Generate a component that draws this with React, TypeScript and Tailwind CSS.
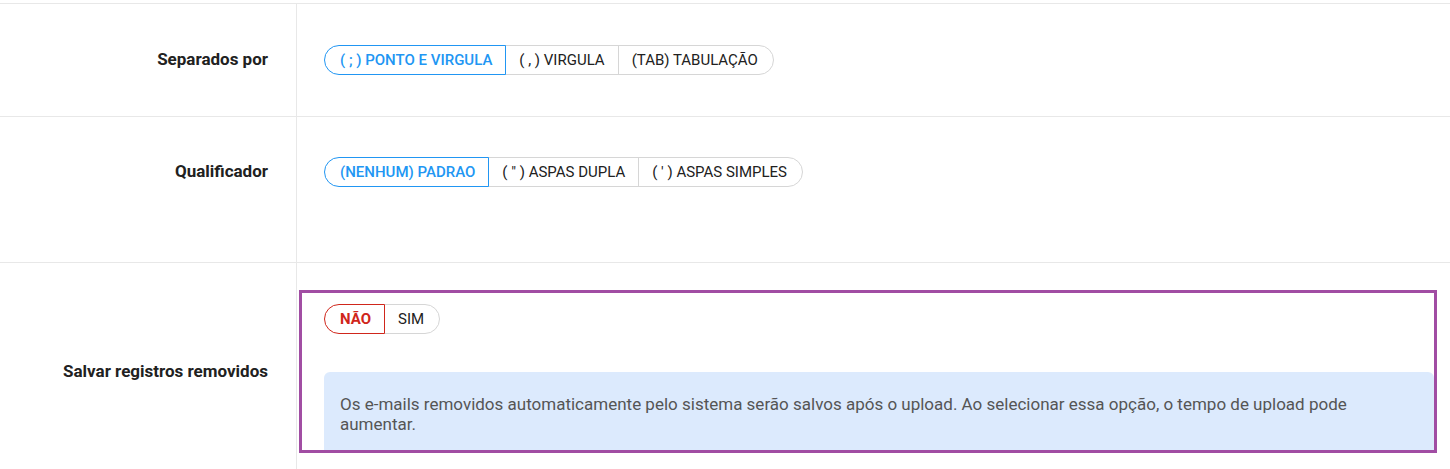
import type { ReactNode } from 'react';

type Option = { label: string; active?: boolean };

const FONT = { fontFamily: 'Roboto, "Liberation Sans", sans-serif' };

function ButtonGroup({ options, tone = 'blue' }: { options: Option[]; tone?: 'blue' | 'red' }) {
  return (
    <div className="flex h-[30px]">
      {options.map((opt, idx) => {
        const first = idx === 0;
        const last = idx === options.length - 1;
        const activeCls =
          tone === 'red'
            ? 'z-10 border-[#d0261b] text-[#d0261b] font-bold'
            : 'z-10 border-[#2196f3] text-[#2196f3] font-medium';
        return (
          <button
            key={opt.label}
            className={`relative flex items-center border px-[13px] text-[15px] leading-none ${
              first ? 'rounded-l-full pl-[15px]' : '-ml-px'
            } ${last ? 'rounded-r-full pr-[15px]' : ''} ${
              opt.active ? activeCls : 'border-[#d6d6d6] text-[#212121]'
            }`}
          >
            {opt.label}
          </button>
        );
      })}
    </div>
  );
}

function Label({ children }: { children: ReactNode }) {
  return <span className="text-[17px] font-bold text-[#212121]">{children}</span>;
}

export default function App() {
  return (
    <div className="h-[469px] w-[1450px] overflow-hidden bg-white pt-[3px]" style={FONT}>
      {/* Separados por */}
      <div className="flex h-[114px] border-y border-[#e8e8e8]">
        <div className="flex w-[297px] items-center justify-end border-r border-[#e8e8e8] pr-[28px]">
          <Label>Separados por</Label>
        </div>
        <div className="flex flex-1 items-center pl-[27px]">
          <ButtonGroup
            options={[
              { label: '( ; ) PONTO E VIRGULA', active: true },
              { label: '( , ) VIRGULA' },
              { label: '(TAB) TABULAÇÃO' },
            ]}
          />
        </div>
      </div>

      {/* Qualificador */}
      <div className="flex h-[146px] border-b border-[#e8e8e8]">
        <div className="flex w-[297px] justify-end border-r border-[#e8e8e8] pr-[28px] pt-[40px]">
          <div className="flex h-[30px] items-center">
            <Label>Qualificador</Label>
          </div>
        </div>
        <div className="flex-1 pl-[27px] pt-[40px]">
          <ButtonGroup
            options={[
              { label: '(NENHUM) PADRAO', active: true },
              { label: '( " ) ASPAS DUPLA' },
              { label: "( ' ) ASPAS SIMPLES" },
            ]}
          />
        </div>
      </div>

      {/* Salvar registros removidos */}
      <div className="flex h-[220px]">
        <div className="flex w-[297px] justify-end border-r border-[#e8e8e8] pr-[28px] pt-[27px]">
          <div className="flex h-[163px] items-center">
            <Label>Salvar registros removidos</Label>
          </div>
        </div>
        <div className="flex-1 pl-[2px] pr-[13px] pt-[27px]">
          <div className="h-[163px] overflow-hidden border-[3px] border-[#a14da3] pl-[22px] pt-[11px]">
            <ButtonGroup tone="red" options={[{ label: 'NÃO', active: true }, { label: 'SIM' }]} />
            <div className="mt-[38px] h-[90px] rounded-t-[6px] bg-[#dceafd] px-4 pt-[22px] text-[17px] leading-5 text-[#555555]">
              Os e-mails removidos automaticamente pelo sistema serão salvos após o upload. Ao selecionar essa opção, o
              tempo de upload pode aumentar.
            </div>
          </div>
        </div>
      </div>
    </div>
  );
}
